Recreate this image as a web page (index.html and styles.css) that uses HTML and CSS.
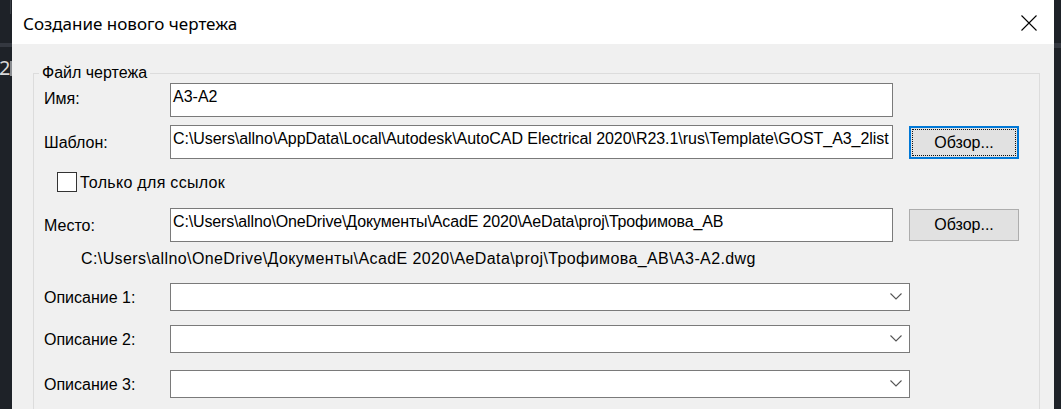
FILE: index.html
```html
<!DOCTYPE html>
<html lang="ru">
<head>
<meta charset="utf-8">
<title>Создание нового чертежа</title>
<link rel="stylesheet" href="styles.css">
</head>
<body>
<div class="screen">
  <div class="strip strip-left">
    <div class="tick"></div>
    <div class="band"></div>
    <div class="digit"><span class="digit-text">2</span><span class="digit-bar"></span></div>
  </div>
  <div class="dialog">
    <div class="titlebar">
      <span class="title">Создание нового чертежа</span>
      <svg class="close" width="16" height="16" viewBox="0 0 16 16" aria-hidden="true">
        <path d="M0.5 0.5 L15.5 15.5 M15.5 0.5 L0.5 15.5" stroke="#000" stroke-width="1.1" fill="none"/>
      </svg>
    </div>
    <div class="body">
      <fieldset class="group">
        <legend class="group-title">Файл чертежа</legend>

        <div class="row row-name">
          <span class="label">Имя:</span>
          <div class="textbox">A3-A2</div>
        </div>

        <div class="row row-template">
          <span class="label">Шаблон:</span>
          <div class="textbox textbox-long">C:\Users\allno\AppData\Local\Autodesk\AutoCAD Electrical 2020\R23.1\rus\Template\GOST_A3_2list</div>
          <div class="button button-focus"><span class="button-inner">Обзор...</span></div>
        </div>

        <div class="row row-check">
          <span class="checkbox"></span>
          <span class="check-label">Только для ссылок</span>
        </div>

        <div class="row row-place">
          <span class="label">Место:</span>
          <div class="textbox textbox-place">C:\Users\allno\OneDrive\Документы\AcadE 2020\AeData\proj\Трофимова_AB</div>
          <div class="button"><span class="button-inner">Обзор...</span></div>
        </div>

        <div class="row row-path">C:\Users\allno\OneDrive\Документы\AcadE 2020\AeData\proj\Трофимова_AB\A3-A2.dwg</div>

        <div class="row row-desc row-desc1">
          <span class="label">Описание 1:</span>
          <div class="combo">
            <svg class="chevron" width="12" height="7" viewBox="0 0 12 7" aria-hidden="true"><path d="M0.5 0.5 L6 6 L11.5 0.5" stroke="#555" stroke-width="1.1" fill="none"/></svg>
          </div>
        </div>

        <div class="row row-desc row-desc2">
          <span class="label">Описание 2:</span>
          <div class="combo">
            <svg class="chevron" width="12" height="7" viewBox="0 0 12 7" aria-hidden="true"><path d="M0.5 0.5 L6 6 L11.5 0.5" stroke="#555" stroke-width="1.1" fill="none"/></svg>
          </div>
        </div>

        <div class="row row-desc row-desc3">
          <span class="label">Описание 3:</span>
          <div class="combo">
            <svg class="chevron" width="12" height="7" viewBox="0 0 12 7" aria-hidden="true"><path d="M0.5 0.5 L6 6 L11.5 0.5" stroke="#555" stroke-width="1.1" fill="none"/></svg>
          </div>
        </div>
      </fieldset>
    </div>
  </div>
  <div class="strip strip-right">
    <div class="band band-right"></div>
  </div>
</div>
</body>
</html>
```
FILE: styles.css
```css
* { box-sizing: border-box; }

html, body {
  margin: 0;
  padding: 0;
  background: #1e2228;
}

.screen {
  display: flex;
  width: 1061px;
  height: 409px;
  overflow: hidden;
  font-family: "Liberation Sans", Arial, sans-serif;
  font-size: 16px;
  color: #000;
}

/* dark background strips */
.strip {
  background: #1e2228;
  display: flex;
  flex-direction: column;
}
.strip-left { width: 12px; flex: none; }
.strip-right { width: 7px; flex: none; }

.tick {
  width: 1px;
  height: 14px;
  margin-left: 10px;
  background: #3a3f46;
}
.band {
  height: 4px;
  margin-top: 29px;
  background: #343840;
}
.band-right {
  margin-top: 43px;
  height: 5px;
}
.digit {
  display: flex;
  align-items: center;
  margin-top: 13px;
  height: 16px;
}
.digit-text {
  width: 10px;
  color: #d8d8d8;
  font-family: "Noto Sans", sans-serif;
  font-size: 20px;
  line-height: 16px;
  margin-left: -1px;
}
.digit-bar {
  width: 2px;
  height: 15px;
  margin-left: 1px;
  background: #8a8d91;
}

/* dialog */
.dialog {
  width: 1042px;
  flex: none;
  display: flex;
  flex-direction: column;
  background: #f0f0f0;
}

.titlebar {
  height: 44px;
  flex: none;
  background: #fff;
  display: flex;
  align-items: center;
  justify-content: space-between;
  padding: 0 17px 0 11px;
}
.title {
  font-family: "Noto Sans", "Open Sans", sans-serif;
  font-size: 17px;
  color: #000;
  margin-top: 3px;
}
.close {
  display: block;
  margin-top: 1px;
}

.body {
  flex: 1;
  padding: 20px 14px 0 21px;
}

.group {
  margin: 0;
  padding: 1px 0 30px 10px;
  border: 1px solid #dcdcdc;
  min-width: 0;
}
.group-title {
  padding: 0 3px;
  margin-left: -5px;
  line-height: 18px;
  font-size: 16px;
}

.row {
  display: flex;
  align-items: center;
  line-height: 18px;
}
.label {
  width: 126px;
  flex: none;
}

.textbox {
  width: 723px;
  height: 34px;
  flex: none;
  background: #fff;
  border: 1px solid #7a7a7a;
  padding: 4px 2px 0 2px;
  white-space: nowrap;
  overflow: hidden;
  align-self: flex-start;
}
.textbox-long { letter-spacing: -0.05px; }
.textbox-place { letter-spacing: -0.15px; }
.row-name .label { margin-top: -3px; }

.row-template { margin-top: 8px; height: 34px; }
.row-template .label { margin-top: 2px; }

.button {
  width: 110px;
  height: 33px;
  flex: none;
  margin-left: 16px;
  background: #e1e1e1;
  border: 1px solid #adadad;
  display: flex;
  align-items: stretch;
  padding: 2px;
}
.button-inner {
  flex: 1;
  display: flex;
  align-items: center;
  justify-content: center;
  border: 1px dotted transparent;
}
.button-focus {
  border: 2px solid #0078d7;
  padding: 1px;
  margin-top: 1px;
}
.button-focus .button-inner {
  border-color: #111;
}

.row-check {
  margin-top: 13px;
  height: 20px;
}
.checkbox {
  width: 20px;
  height: 20px;
  flex: none;
  margin-left: 13px;
  background: #fff;
  border: 1px solid #333;
}
.check-label {
  margin-left: 3px;
  margin-top: 1px;
  letter-spacing: 0.3px;
}

.row-place { margin-top: 16px; height: 34px; }
.row-place .label { margin-top: 2px; }
.row-place .button { height: 32px; margin-top: 1px; align-self: flex-start; }

.row-path {
  margin-top: 8px;
  height: 18px;
  padding-left: 37px;
  white-space: nowrap;
  letter-spacing: 0.4px;
}

.row-desc { height: 28px; }
.row-desc1 { margin-top: 15px; }
.row-desc2 { margin-top: 14px; }
.row-desc3 { margin-top: 17px; }
.row-desc .label { margin-top: 2px; }

.combo {
  width: 740px;
  height: 28px;
  flex: none;
  background: #fff;
  border: 1px solid #7a7a7a;
  display: flex;
  align-items: center;
  justify-content: flex-end;
  padding-right: 7px;
}
.chevron { display: block; margin-top: -1px; }
```
